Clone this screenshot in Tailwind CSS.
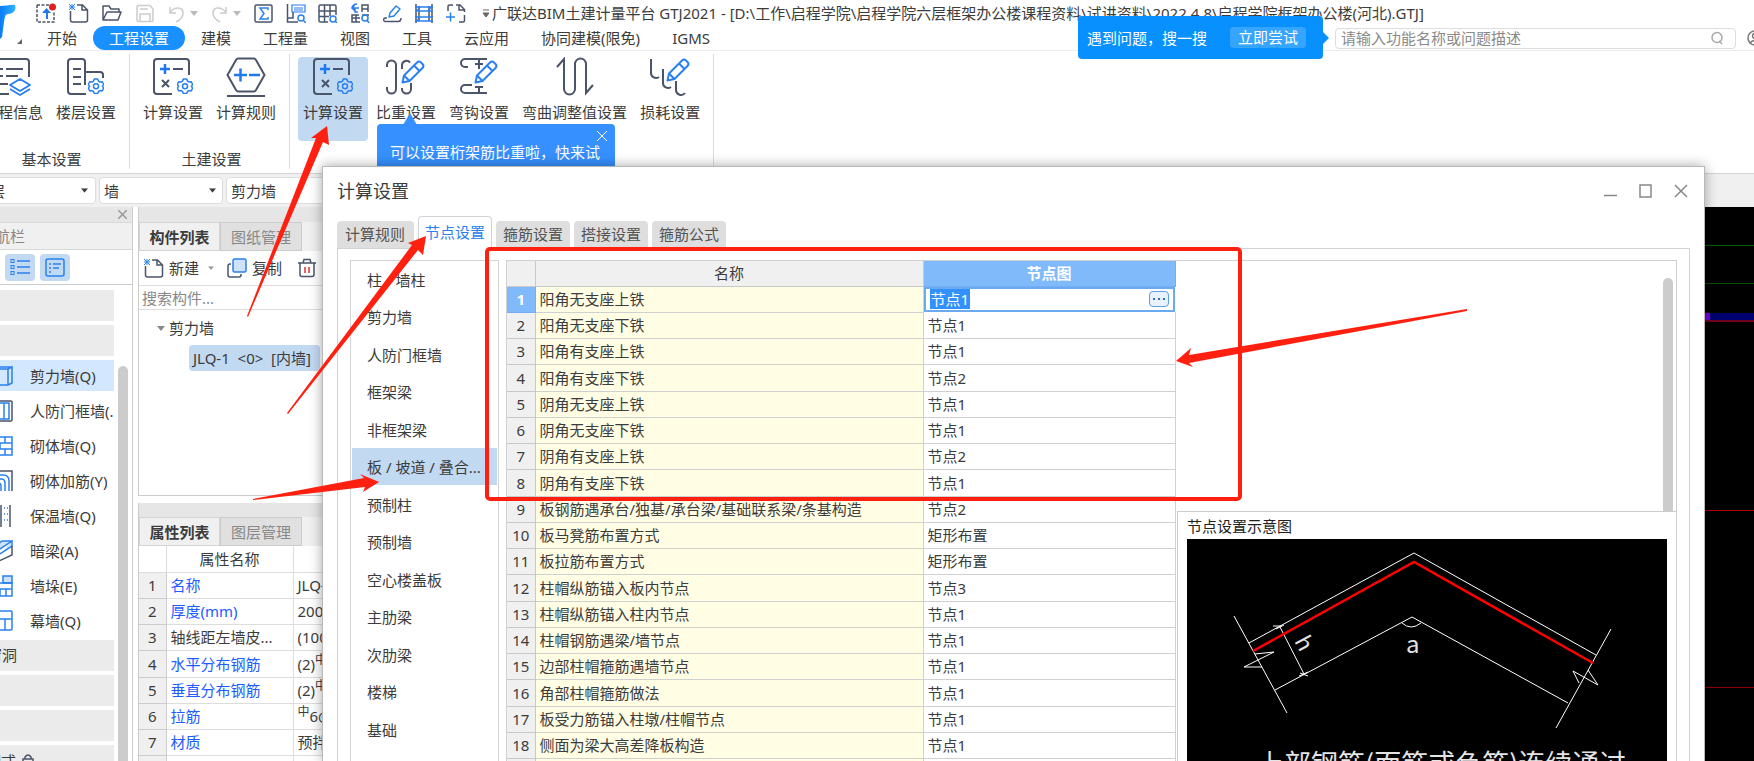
<!DOCTYPE html>
<html lang="zh-CN">
<head>
<meta charset="utf-8">
<title>广联达BIM土建计量平台 GTJ2021</title>
<script src="https://cdn.jsdelivr.net/npm/@tailwindcss/browser@4"></script>
</head>
<body class="relative flex h-screen flex-col overflow-hidden bg-white font-['Noto_Sans','Noto_Sans_CJK_SC',sans-serif] text-[15px] leading-5 text-[#3c3c3c]">

<svg class="absolute h-0 w-0">
  <defs>
    <linearGradient id="lg" x1="0" x2="1"><stop offset="0" stop-color="#0a7cf5"/><stop offset="1" stop-color="#2fb4ff"/></linearGradient>
    <symbol id="gear" viewBox="0 0 16 16">
      <path d="M6.300.8h3.400l.8 2 1.500.9 2.200-.3 1.500 2.700-1.300 1.900 1.300 1.900-1.500 2.700-2.200-.3-1.500.9-.8 2H6.300l-.8-2-1.500-.9-2.200.3L.3 9.900 1.600 8 .3 6.100l1.500-2.700 2.200.3 1.500-.9z" transform="translate(0 .3)" fill="none" stroke="#2a80ee" stroke-width="1.500" stroke-linejoin="round"/>
      <circle cx="8" cy="8.200" r="2.500" fill="none" stroke="#2a80ee" stroke-width="1.500"/>
    </symbol>
    <symbol id="pencil" viewBox="0 0 24 24">
      <path d="M1.500 22.500l1.500-7L16 2.500q2-2 4 0l1.500 1.500q2 2 0 4L8.500 21zM13 5.500l5.500 5.500M3 15.500L8.500 21" fill="none" stroke="#2a80ee" stroke-width="2" stroke-linejoin="round"/>
    </symbol>
    <symbol id="calc" viewBox="0 0 42 40">
      <path d="M37 18V5a3 3 0 0 0-3-3H5a3 3 0 0 0-3 3v29a3 3 0 0 0 3 3h15" fill="none" stroke="#4b5468" stroke-width="2"/>
      <path d="M8 12h10M13 7v10" stroke="#1f78ee" stroke-width="2.500"/>
      <path d="M21 12h10M10 23l7 7M17 23l-7 7" stroke="#4b5468" stroke-width="2"/>
      <use href="#gear" x="25" y="21" width="16" height="16"/>
    </symbol>
    <symbol id="caret" viewBox="0 0 8 5"><path d="M0 0h8L4 5z" fill="currentColor"/></symbol>
  </defs>
</svg>

<header class="relative">
  <svg class="absolute left-0 top-0" width="24" height="48" viewBox="0 0 24 48">
    <path d="M0 6C6 6 11 4 15 5c2 5-2 9-7 9-3 0-3 3-4 8L2 37l-2 2z" fill="url(#lg)"/>
    <path d="M22 39v5h-5z" fill="#666"/>
  </svg>
  <div class="flex h-[26px] items-center pl-9">
    <div class="flex items-center gap-[13px]">
      <button aria-label="上传"><svg width="20" height="20" viewBox="0 0 20 20"><path d="M1 2h12M1 2v17h17V8" fill="none" stroke="#4b5468" stroke-width="1.500" stroke-dasharray="3 1.500"/><path d="M10 16V10H6l4.500-5L15 10h-3v6z" fill="#1f78ee"/><circle cx="16.500" cy="4" r="3.500" fill="#e02020"/></svg></button>
      <button aria-label="新建"><svg width="20" height="20" viewBox="0 0 20 20"><path d="M1.500 8v9a2 2 0 0 0 2 2h13a2 2 0 0 0 2-2V7l-5-5H8M13 2v5h5" fill="none" stroke="#4b5468" stroke-width="1.500"/><path d="M0 1l6 6M6 1L0 7M3 1v6M0 4h6" stroke="#2a80ee" stroke-width="1"/></svg></button>
      <button aria-label="打开"><svg width="20" height="20" viewBox="0 0 20 20"><path d="M1 17V3h6l2 3h8v3M1 17l4-8h14l-3 8z" fill="none" stroke="#4b5468" stroke-width="1.500" stroke-linejoin="round"/></svg></button>
      <button aria-label="保存"><svg width="20" height="20" viewBox="0 0 20 20"><path d="M2 4a1.500 1.500 0 0 1 1.500-1.500H15L18 6v11a1.500 1.500 0 0 1-1.500 1.500h-13A1.500 1.500 0 0 1 2 17zM5 6h8M5 18v-7h10v7" fill="none" stroke="#ccc" stroke-width="1.500"/></svg></button>
      <button aria-label="撤销" class="flex items-center gap-0.5 text-[#bbb]"><svg width="20" height="20" viewBox="0 0 20 20"><path d="M2 4v6h6M2 9.500C7 3 15 4 15 10c0 4-3 7-7 9" fill="none" stroke="#ccc" stroke-width="1.500"/></svg><svg width="8" height="5"><use href="#caret"/></svg></button>
      <button aria-label="重做" class="flex items-center gap-0.5 text-[#bbb]"><svg width="20" height="20" viewBox="0 0 20 20"><path d="M15 4v6H9M15 9.500C10 3 2 4 2 10c0 4 3 7 7 9" fill="none" stroke="#ccc" stroke-width="1.500"/></svg><svg width="8" height="5"><use href="#caret"/></svg></button>
    </div>
    <div class="ml-[13px] flex items-center gap-3">
      <button aria-label="汇总计算"><svg width="20" height="20" viewBox="0 0 20 20"><rect x="1" y="2" width="17" height="17" rx="1.500" fill="none" stroke="#4b5468" stroke-width="1.500"/><path d="M14 7V5H6l4 5.500L6 16h8v-2" fill="none" stroke="#2a80ee" stroke-width="1.500"/></svg></button>
      <button aria-label="查看计算式"><svg width="20" height="20" viewBox="0 0 20 20"><path d="M1.500 1v18H12M1 15h6V9" fill="none" stroke="#4b5468" stroke-width="1.500"/><path d="M6 2h13v7H6zM8 5h9M8 7h9" fill="none" stroke="#2a80ee" stroke-width="1.200" /><circle cx="15" cy="15" r="3" fill="none" stroke="#2a80ee" stroke-width="1.500"/><path d="M17 17l3 3" stroke="#2a80ee" stroke-width="1.500"/></svg></button>
      <button aria-label="查看报表"><svg width="20" height="20" viewBox="0 0 20 20"><path d="M10 19H2.500A1.500 1.500 0 0 1 1 17.500v-14A1.500 1.500 0 0 1 2.500 2h14A1.500 1.500 0 0 1 18 3.500V12M1 8h17M1 13.500h10M6.500 2v17M12 2v11" fill="none" stroke="#4b5468" stroke-width="1.500"/><circle cx="15" cy="16" r="3" fill="none" stroke="#2a80ee" stroke-width="1.500"/><path d="M17 18l2 2" stroke="#2a80ee" stroke-width="1.500"/></svg></button>
      <button aria-label="查看钢筋量"><svg width="20" height="20" viewBox="0 0 20 20"><path d="M12 9V2h6v7M12 6h6M9 12H2v7h8M2 15h8M6 12v7M12 12h7" fill="none" stroke="#4b5468" stroke-width="1.500"/><path d="M7 1C4 1 2 3 2 5h7M5 2L2 5l3 3M8 9H5V5" fill="none" stroke="#2a80ee" stroke-width="1.500"/><circle cx="15" cy="15" r="3" fill="none" stroke="#2a80ee" stroke-width="1.500"/><path d="M17 17l2 3" stroke="#2a80ee" stroke-width="1.500"/></svg></button>
      <button aria-label="编辑"><svg width="20" height="20" viewBox="0 0 20 20"><path d="M5 15H3a1.800 1.800 0 0 0 0 3.500h13c2 0 3-1 3-3.500" fill="none" stroke="#4b5468" stroke-width="1.500"/><path d="M7 14l1-4 6-7 4 3-6 7z" fill="none" stroke="#2a80ee" stroke-width="1.500" stroke-linejoin="round"/></svg></button>
      <button aria-label="钢筋三维"><svg width="20" height="20" viewBox="0 0 20 20"><path d="M2 1v19M18 1v19M5 3v15M15 3v15" stroke="#4b5468" stroke-width="1.500"/><path d="M1 4h18M1 8h18M1 14h18M1 18h18M3 8l3-4M3 18l3-4M14 8l3-4" stroke="#2a80ee" stroke-width="1.500"/></svg></button>
      <button aria-label="全屏"><svg width="20" height="20" viewBox="0 0 20 20"><path d="M2 8V3.500A1.500 1.500 0 0 1 3.500 2H7M10 2h4l4.500 4.500V9M13 2v5h5M18.500 12v5.500A1.500 1.500 0 0 1 17 19h-4" fill="none" stroke="#4b5468" stroke-width="1.500"/><path d="M0 14h9M4.500 9.500v9" stroke="#2a80ee" stroke-width="1.500"/></svg></button>
    </div>
    <svg class="ml-4 text-[#666]" width="8" height="9" viewBox="0 0 8 9"><path d="M1 1h6M1 4h6L4 8z" fill="currentColor" stroke="currentColor"/></svg>
    <h1 class="ml-0.5 whitespace-nowrap">广联达BIM土建计量平台 GTJ2021 - [D:\工作\启程学院\启程学院六层框架办公楼课程资料\试讲资料\2022.4.8\启程学院框架办公楼(河北).GTJ]</h1>
  </div>
  <div class="flex h-[25px] items-center border-b border-[#ececec] pl-[31px] pr-[7px]">
    <nav class="flex flex-1 whitespace-nowrap">
      <button class="px-4">开始</button>
      <button class="rounded-full bg-[#1890ff] px-4 py-0.5 text-white">工程设置</button>
      <button class="px-4">建模</button>
      <button class="px-4">工程量</button>
      <button class="px-4">视图</button>
      <button class="px-4">工具</button>
      <button class="px-4">云应用</button>
      <button class="px-4">协同建模(限免)</button>
      <button class="px-4">IGMS</button>
    </nav>
    <label class="mr-[11px] flex h-[21px] w-[401px] items-center rounded-sm border border-[#ddd] px-[5px]">
      <input aria-label="功能搜索" class="min-w-0 flex-1 placeholder-[#8a8a8a] outline-none" placeholder="请输入功能名称或问题描述">
      <svg class="mr-1.5" width="14" height="14" viewBox="0 0 14 14"><circle cx="7" cy="6.500" r="5" fill="none" stroke="#aaa" stroke-width="1.500"/><path d="M9 10l3 3" stroke="#aaa" stroke-width="1.500"/></svg>
    </label>
    <button aria-label="账户" class="-mr-4"><svg width="16" height="16" viewBox="0 0 16 16" fill="none" stroke="#777" stroke-width="1.500"><circle cx="8" cy="8" r="7"/><circle cx="8" cy="6" r="2.500"/><path d="M3 13q5-5 10 0"/></svg></button>
  </div>
  <div class="absolute left-[1078px] top-4 flex h-[43px] w-[245px] items-center rounded bg-[#0890ff] pl-[9px] text-white">
    <span class="flex-1 whitespace-nowrap">遇到问题，搜一搜</span>
    <button class="mr-[17px] rounded-sm bg-[#36a5ff] px-2 leading-[21px]">立即尝试</button>
    <svg class="absolute -right-1.5 top-4" width="6" height="12"><path d="M0 0l6 6-6 6z" fill="#0890ff"/></svg>
  </div>
</header>

<section aria-label="功能区" class="relative flex h-[122px] gap-2 whitespace-nowrap pt-[3px]">
  <div class="-ml-[22px] flex flex-col pt-[3px]">
    <div class="flex gap-[3px]">
      <button class="flex h-[84px] flex-col items-center gap-[5px] px-[5px]"><svg width="42" height="40" viewBox="0 0 42 40"><path d="M37 20V5a3 3 0 0 0-3-3H5a3 3 0 0 0-3 3v29a3 3 0 0 0 3 3h12M8 12h3M14 12h17M8 19h3M14 19h12M8 27h8" fill="none" stroke="#4b5468" stroke-width="2"/><path d="M28 22l10 6-10 6-10-6zM18 32l10 6 10-6" fill="none" stroke="#2a80ee" stroke-width="2" stroke-linejoin="round"/></svg>工程信息</button>
      <button class="flex h-[84px] flex-col items-center gap-[5px] px-[5px]"><svg width="42" height="40" viewBox="0 0 42 40"><path d="M20 28V5a3 3 0 0 0-3-3H6a3 3 0 0 0-3 3v29a3 3 0 0 0 3 3h15M8 12h8M8 20h8M8 27h8M20 15h15a3 3 0 0 1 3 3v3" fill="none" stroke="#4b5468" stroke-width="2"/><use href="#gear" x="23" y="21" width="16" height="16"/></svg>楼层设置</button>
    </div>
    <div class="pl-1 pt-2 text-center">基本设置</div>
  </div>
  <div class="h-[115px] w-px bg-[#ddd]"></div>
  <div class="flex flex-col pt-[3px]">
    <div class="flex gap-[3px]">
      <button class="flex h-[84px] flex-col items-center gap-[5px] px-[5px]"><svg width="42" height="40"><use href="#calc"/></svg>计算设置</button>
      <button class="flex h-[84px] flex-col items-center gap-[5px] px-[5px]"><svg width="42" height="40" viewBox="0 0 42 40"><path d="M2.500 18L11 3q1-1.500 2-1.500h16q1 0 2 1.500l8.500 15L31 33q-1 1.500-2 1.500H13q-1 0-2-1.500zM2 39h38" fill="none" stroke="#4b5468" stroke-width="2"/><path d="M9 18h13M15.500 11.500v13M24 18h11" stroke="#1f78ee" stroke-width="2.500"/></svg>计算规则</button>
    </div>
    <div class="pl-1 pt-2 text-center">土建设置</div>
  </div>
  <div class="h-[115px] w-px bg-[#ddd]"></div>
  <div class="flex gap-[3px] pt-[3px]">
    <button class="flex h-[84px] flex-col items-center gap-[5px] rounded bg-[#c2d9f2] px-[5px]"><svg width="42" height="40"><use href="#calc"/></svg>计算设置</button>
    <button class="flex h-[84px] flex-col items-center gap-[5px] px-[5px]"><svg width="42" height="40" viewBox="0 0 42 40"><path d="M2 10V8a4.500 4.500 0 0 1 9 0v24a4.500 4.500 0 0 1-9 0v-2M17 12V8a4.500 4.500 0 0 1 8-2.500M17 31v1a4.500 4.500 0 0 0 9 0v-6" fill="none" stroke="#4b5468" stroke-width="2"/><use href="#pencil" x="16" y="3" width="24" height="24"/></svg>比重设置</button>
    <button class="flex h-[84px] flex-col items-center gap-[5px] px-[5px]"><svg width="42" height="40" viewBox="0 0 42 40"><path d="M29 2H7a4 4 0 0 0 0 8h3M29 36H7a4 4 0 0 1 0-8h7M21 3v9M17 7h8M21 30v6M17 30h8" fill="none" stroke="#4b5468" stroke-width="2"/><use href="#pencil" x="16" y="3" width="24" height="24"/></svg>弯钩设置</button>
    <button class="flex h-[84px] flex-col items-center gap-[5px] px-[5px]"><svg width="42" height="40" viewBox="0 0 42 40"><path d="M3 10l7-8v30a5 5 0 0 0 11 0V7a5 5 0 0 1 11 0v29l7-8" fill="none" stroke="#4b5468" stroke-width="2"/></svg>弯曲调整值设置</button>
    <button class="flex h-[84px] flex-col items-center gap-[5px] px-[5px]"><svg width="42" height="40" viewBox="0 0 42 40"><path d="M2 2v14a5 5 0 0 0 8 4M14 12v14a5 5 0 0 0 8 4M27 24v9a5 5 0 0 0 9 3" fill="none" stroke="#4b5468" stroke-width="2"/><use href="#pencil" x="17" y="1" width="24" height="24"/></svg>损耗设置</button>
  </div>
  <div class="h-[115px] w-px bg-[#ddd]"></div>
  <div role="tooltip" class="absolute left-[377px] top-[73px] h-[60px] w-[238px] rounded bg-[#3690ff] pl-[13px] pt-[18px] text-white">
    <svg class="absolute -top-[11px] left-[26px]" width="14" height="12"><path d="M7 0l7 12H0z" fill="#3690ff"/></svg>
    <button aria-label="关闭提示" class="absolute right-[7px] top-[6px]"><svg width="12" height="12"><path d="M1 1l10 10M11 1L1 11" stroke="#fff" stroke-width="1"/></svg></button>
    可以设置桁架筋比重啦，快来试
  </div>
</section>

<div class="flex h-[34px] items-center gap-[3px] border-t border-[#d4d4d4] bg-[#f0f0f0]">
  <div class="relative -ml-[34px] w-[130px]"><select aria-label="楼层" class="h-[27px] w-full appearance-none rounded border border-[#ddd] bg-white px-2"><option>首层</option></select><svg class="absolute right-2 top-[11px]" width="7" height="5" viewBox="0 0 8 5"><use href="#caret"/></svg></div>
  <div class="relative w-[124px]"><select aria-label="构件大类" class="h-[27px] w-full appearance-none rounded border border-[#ddd] bg-white px-1"><option>墙</option></select><svg class="absolute right-[7px] top-[11px]" width="7" height="5" viewBox="0 0 8 5"><use href="#caret"/></svg></div>
  <div class="w-[124px]"><select aria-label="构件类型" class="h-[27px] w-full appearance-none rounded border border-[#ddd] bg-white px-1"><option>剪力墙</option></select></div>
</div>

<main class="flex min-h-0 flex-1">
  <aside class="flex w-[133px] shrink-0 flex-col border-r border-[#ccc] whitespace-nowrap">
    <div class="flex h-[15px] shrink-0 items-center justify-end bg-[#e6e6e6] pr-[5px]"><button aria-label="关闭导航栏"><svg class="block" width="9" height="9"><path d="M0 0l9 9M9 0L0 9" stroke="#999" stroke-width="1.500"/></svg></button></div>
    <h2 class="-ml-5 h-[28px] shrink-0 border-y border-[#d8d8d8] bg-[#f0f0f0] leading-[26px] text-[#888]">导航栏</h2>
    <div class="flex h-[35px] shrink-0 items-center gap-[5px] border-b border-[#ccc] pl-[5px]">
      <button aria-label="列表" class="grid h-[27px] w-[30px] place-items-center rounded bg-[#c2d9f2]"><svg width="20" height="18"><path d="M7 3h13M7 9h13M7 15h13" stroke="#2a80ee" stroke-width="1.500"/><g fill="none" stroke="#2a80ee"><rect x="1" y="1.500" width="3" height="3"/><rect x="1" y="7.500" width="3" height="3"/><rect x="1" y="13.500" width="3" height="3"/></g></svg></button>
      <button aria-label="卡片" class="grid h-[27px] w-[30px] place-items-center rounded bg-[#c2d9f2]"><svg width="20" height="19" fill="none" stroke="#2a80ee" stroke-width="1.500"><rect x="1" y="1" width="18" height="17" rx="2"/><path d="M4 6h2M8 6h8M4 10h2M8 10h6M4 14h2"/></svg></button>
    </div>
    <div class="flex min-h-0 flex-1 pt-[5px]">
      <ul id="nav" class="flex w-[114px] flex-col gap-1"></ul>
      <div class="ml-1 mt-[76px] w-2.5 rounded-t-full bg-[#ccc]"></div>
    </div>
  </aside>

  <div class="ml-[5px] flex w-[196px] shrink-0 flex-col overflow-hidden whitespace-nowrap">
    <section class="flex h-[289px] shrink-0 flex-col border-b border-l border-[#ccc]">
      <div class="h-[15px] shrink-0 bg-[#e6e6e6]"></div>
      <div class="flex h-[29px] shrink-0 bg-[#f0f0f0]">
        <button class="w-[81px] border border-[#d4d4d4] font-bold">构件列表</button>
        <button class="w-[82px] border border-[#ccc] bg-[#e0e0e0] text-[#888]">图纸管理</button>
      </div>
      <div class="flex h-[35px] shrink-0 items-center border-b border-[#ddd] pl-[5px]">
        <button class="flex items-center"><svg class="mr-[5px]" width="20" height="20" viewBox="0 0 20 20"><path d="M1.500 8v9a2 2 0 0 0 2 2h13a2 2 0 0 0 2-2V7l-5-5H8M13 2v5h5" fill="none" stroke="#4b5468" stroke-width="1.500"/><path d="M0 1l6 6M6 1L0 7M3 1v6M0 4h6" stroke="#2a80ee"/></svg>新建<svg class="ml-[9px] text-[#999]" width="6" height="4" viewBox="0 0 8 5"><use href="#caret"/></svg></button>
        <button class="ml-[13px] flex items-center gap-[5px]"><svg width="20" height="20" viewBox="0 0 20 20"><path d="M4 6H3a2 2 0 0 0-2 2v9a2 2 0 0 0 2 2h9a2 2 0 0 0 2-2v-1" fill="none" stroke="#4b5468" stroke-width="1.500"/><rect x="6" y="1" width="13" height="13" rx="1.500" fill="#cfe2fb" stroke="#2a80ee" stroke-width="1.500"/></svg>复制</button>
        <button aria-label="删除" class="ml-4"><svg width="18" height="20" viewBox="0 0 18 20"><path d="M0 5h18M5 5l1-3.500h6L13 5M2 5v11.500a2 2 0 0 0 2 2h10a2 2 0 0 0 2-2V5" fill="none" stroke="#4b5468" stroke-width="1.500"/><path d="M7 9v6M11 9v6" stroke="#e0303a" stroke-width="1.500"/></svg></button>
      </div>
      <input aria-label="搜索构件" class="h-[24px] shrink-0 border-b border-[#ddd] px-[3px] placeholder-[#888] outline-none" placeholder="搜索构件...">
      <div class="pl-[18px] pt-2">
        <div class="flex items-center gap-1"><svg class="text-[#888]" width="8" height="5"><use href="#caret"/></svg>剪力墙</div>
        <button class="ml-[32px] mt-[7px] w-[131px] rounded bg-[#c2d9f2] px-1 text-left leading-[26px]">JLQ-1&nbsp; &lt;0&gt;&nbsp; [内墙]</button>
      </div>
    </section>
    <section class="mt-[7px] flex min-h-0 flex-1 flex-col border-l border-[#ccc]">
      <div class="h-[14px] shrink-0 bg-[#e6e6e6]"></div>
      <div class="flex h-[29px] shrink-0 bg-[#f0f0f0]">
        <button class="w-[81px] border border-[#d4d4d4] font-bold">属性列表</button>
        <button class="w-[82px] border border-[#ccc] bg-[#e0e0e0] text-[#888]">图层管理</button>
      </div>
      <table class="w-full table-fixed border-collapse">
        <colgroup><col class="w-[27px]"><col class="w-[127px]"><col></colgroup>
        <thead><tr class="h-[26px]"><th class="border-r border-b border-[#ddd]"></th><th class="border-r border-b border-[#ddd] font-normal">属性名称</th><th class="border-b border-[#ddd]"></th></tr></thead>
        <tbody id="props" class="[&>tr]:h-[26px] [&>tr:nth-child(4n)]:h-[27px]"></tbody>
      </table>
    </section>
  </div>

  <div aria-label="绘图区" class="flex flex-1 flex-col bg-black">
    <div class="mt-[38px] h-px bg-[#006000]"></div>
    <div class="mt-[37px] h-px bg-[#005000]"></div>
    <div class="mt-[29px] flex h-[9px] border-b-2 border-[#70001c] bg-[#000070]"><div class="ml-auto mr-[44px] w-[6px] bg-[#7800e0]"></div></div>
    <div class="mt-[188px] h-px bg-[#b00000]"></div>
    <div class="mt-[176px] h-px bg-[#900000]"></div>
  </div>
</main>

<section role="dialog" aria-labelledby="dlg" class="absolute bottom-0 left-[322px] right-[49px] top-[166px] flex flex-col border border-b-0 border-[#b8b8b8] bg-white pl-[14px] pr-[14px] shadow-[0_0_12px_rgba(0,0,0,0.35)]">
  <div class="flex h-[48px] shrink-0 items-center pr-0.5">
    <h2 id="dlg" class="flex-1 text-[18px]">计算设置</h2>
    <div class="flex items-center gap-[22px]">
      <button aria-label="最小化"><svg width="13" height="14"><path d="M0 11.500h13" stroke="#888" stroke-width="1.500"/></svg></button>
      <button aria-label="最大化"><svg width="13" height="14"><rect x="1" y="1" width="11" height="12" fill="none" stroke="#888" stroke-width="1.500"/></svg></button>
      <button aria-label="关闭"><svg width="14" height="14"><path d="M1 1l12 12M13 1L1 13" stroke="#888" stroke-width="1.500"/></svg></button>
    </div>
  </div>
  <div role="tablist" class="relative z-10 -mb-px flex h-[34px] shrink-0 items-end gap-[4px] whitespace-nowrap text-[#555]">
    <button role="tab" class="mb-px h-[27px] rounded-t bg-[#dedede] pb-0.5 pl-2 pr-[9px]">计算规则</button>
    <button role="tab" aria-selected="true" class="h-[33px] rounded-t border border-b-0 border-[#cfd3d8] bg-white px-[6px] pb-0.5 text-[#2a80ee]">节点设置</button>
    <button role="tab" class="mb-px h-[27px] rounded-t bg-[#dedede] px-[7px] pb-0.5">箍筋设置</button>
    <button role="tab" class="mb-px h-[27px] rounded-t bg-[#dedede] px-[7px] pb-0.5">搭接设置</button>
    <button role="tab" class="mb-px h-[27px] rounded-t bg-[#dedede] px-[7px] pb-0.5">箍筋公式</button>
  </div>
  <div class="flex min-h-0 flex-1 gap-[7px] border border-b-0 border-[#cfd3d8] pl-3 pr-3 pt-[11px]">
    <ul id="cats" class="flex w-[149px] shrink-0 flex-col border border-b-0 border-[#d4d4d4] px-px whitespace-nowrap"></ul>
    <div class="relative flex min-w-0 flex-1 overflow-hidden border border-b-0 border-[#d0d0d0]">
      <div class="shrink-0">
        <table class="w-[668px] table-fixed border-collapse whitespace-nowrap">
          <colgroup><col class="w-[28px]"><col class="w-[388px]"><col class="w-[252px]"></colgroup>
          <thead><tr class="h-[25px] bg-[#f0f0f0]"><th class="border-r border-b border-[#c8c8c8]"></th><th class="border-r border-b border-[#c8c8c8] font-normal">名称</th><th class="border-r border-b border-[#74aef2] bg-[#80bafb] text-white">节点图</th></tr></thead>
          <tbody id="nodes" class="[&>tr]:h-[26px] [&>tr:nth-child(4n)]:h-[27px]"></tbody>
        </table>
      </div>
      <div class="ml-auto mr-[3px] mt-[17px] w-2.5 rounded-t-full bg-[#ccc]"></div>
      <figure class="absolute bottom-0 right-0 top-[250px] flex w-[499px] flex-col border-l border-t border-[#ccc] bg-white pl-[9px] pr-[9px]">
        <figcaption class="shrink-0 pb-[3px] pt-1 leading-5 text-[#222]">节点设置示意图</figcaption>
        <svg class="min-h-0 w-full flex-1 bg-black" viewBox="1187 539 480 222" preserveAspectRatio="xMidYMin slice" fill="none" stroke="#fff">
          <path d="M1249 643L1414 553L1596 655M1275 690L1412 617L1568 703M1234 616L1287 713M1611 629L1556 728"/>
          <path d="M1255 654L1274 652L1244 667H1262M1579 683L1573 671L1598 685L1588 670M1280 627L1304 674M1273 626h9M1276 629l8-4M1299 676l9-4M1300 673l8 3M1402 623Q1411 631 1421 623"/>
          <path d="M1253 651L1414 562L1593 663" stroke="#f00" stroke-width="2.500"/>
          <g fill="#e4e4e4" stroke="none" class="font-['Noto_Sans_CJK_SC',sans-serif]">
            <text x="1406" y="653" font-size="24">a</text>
            <text transform="translate(1294 641) rotate(62)" font-size="22">h</text>
            <text x="1257" y="774" font-size="27">上部钢筋(面筋或负筋)连续通过</text>
          </g>
        </svg>
      </figure>
    </div>
  </div>
</section>

<svg class="pointer-events-none absolute left-0 top-0 z-20" width="1754" height="761" fill="#ff2010">
  <rect x="487" y="249" width="753" height="250" rx="3" fill="none" stroke="#ff2010" stroke-width="4"/>
  <path d="M327 126L329 145L323 142L248 317L247 316L316 138L311 138z"/>
  <path d="M426 236L423 255L418 250L288 414L287 413L412 245L408 243z"/>
  <path d="M379 482L363 492L365 487L253 500V499L364 478L360 474z"/>
  <path d="M1176 361L1191 348L1189 355L1467 309V311L1189 363L1193 367z"/>
</svg>

<script>
const blueIcon = d => `<svg class="shrink-0" width="20" height="22" viewBox="0 0 20 22" fill="none" stroke="#2a80ee" stroke-width="1.500">${d}</svg>`;
const nav = [
  ['g',''],['g',''],
  ['s','剪力墙(Q)','<path d="M1 4h14v16H1zM15 4l4-2v16l-4 2M1 4l3-2h15"/>'],
  ['i','人防门框墙(.','<rect x="1" y="1" width="18" height="20" rx="1" stroke="#4b5468"/><path d="M4 3h12v16H4zM11 3v16"/>'],
  ['i','砌体墙(Q)','<path d="M1 2h18v18H1zM1 8h18M1 14h18M12 2v6M7 8v6M12 14v6"/>'],
  ['i','砌体加筋(Y)','<path d="M1 1h18v20" stroke="#4b5468"/><path d="M1 5h9q6 0 6 6v10M1 9h7q4 0 4 4v8M1 13h5q2 0 2 3v5"/>'],
  ['i','保温墙(Q)','<path d="M8 0v22M17 0v22" stroke="#4b5468"/><path d="M11 3h1M14 3h1M11 9h1M14 9h1M11 15h1M14 15h1"/>'],
  ['i','暗梁(A)','<path d="M1 7L9 1h10L7 9zM7 14L19 6V1" fill="#cfe2fb"/><path d="M19 6v9L6 21V13" stroke="#4b5468"/>'],
  ['i','墙垛(E)','<path d="M10 1h9v7h-9z" fill="#cfe2fb"/><path d="M19 8v13H1V8zM1 14h18M13 14v7M7 14v7"/>'],
  ['i','幕墙(Q)','<path d="M1 1h17a1 1 0 0 1 1 1v17a1 1 0 0 1-1 1H1zM1 9h18M12 9v11"/>'],
  ['g','门窗洞'],['g',''],['g',''],['l','装配式']];
document.getElementById('nav').innerHTML = nav.map(([k,t,d]) =>
  k==='g' ? `<li class="h-[31px] shrink-0 overflow-hidden bg-[#ebebeb] leading-[31px]"><span class="-ml-[28px]">${t}</span></li>` :
  k==='l' ? `<li class="flex h-[31px] shrink-0 items-center gap-1.5 overflow-hidden bg-[#ebebeb]"><span class="-ml-[29px]">${t}</span><svg width="12" height="14" fill="none" stroke="#4b5468" stroke-width="1.500"><rect x="1" y="5" width="10" height="8"/><path d="M3 5V3q3-4 6 0v2M6 8v2"/></svg></li>` :
  `<li class="h-[31px] shrink-0 overflow-hidden"><button class="${k==='s' ? 'flex h-full w-full items-center gap-[17px] bg-[#d3e7ff]' : 'flex h-full w-full items-center gap-[17px]'}"><span class="-ml-[7px]">${blueIcon(d)}</span>${t}</button></li>`).join('');

const props = [['名称','JLQ-1',1],['厚度(mm)','200',1],['轴线距左墙皮...','(100)',0],['水平分布钢筋','(2)<sup class="text-[12px]">中</sup>',1],['垂直分布钢筋','(2)<sup class="text-[12px]">中</sup>',1],['拉筋','<sup class="text-[12px]">中</sup>6@',1],['材质','预拌混凝土',1],['','',0]];
document.getElementById('props').innerHTML = props.map(([n,v,b],i) =>
  `<tr><td class="border-r border-b border-[#ccc] bg-[#f0f0f0] text-center">${i<7?i+1:''}</td><td class="${b ? 'border-r border-b border-[#ddd] pl-1 text-[#1e5cff]' : 'border-r border-b border-[#ddd] pl-1'}">${n}</td><td class="overflow-hidden border-b border-[#ddd] pl-1">${v}</td></tr>`).join('');

const cats = ['柱 / 墙柱','剪力墙','人防门框墙','框架梁','非框架梁','板 / 坡道 / 叠合...','预制柱','预制墙','空心楼盖板','主肋梁','次肋梁','楼梯','基础'];
document.getElementById('cats').innerHTML = cats.map((t,i) =>
  `<li><button class="${i===5 ? 'h-[37px] w-full bg-[#c2d9f2] pl-[15px] text-left' : 'h-[37px] w-full pl-[15px] text-left'} ${i%2 ? 'mb-px' : ''}">${t}</button></li>`).join('');

const nodes = [['阳角无支座上铁','节点1'],['阳角无支座下铁','节点1'],['阳角有支座上铁','节点1'],['阳角有支座下铁','节点2'],['阴角无支座上铁','节点1'],['阴角无支座下铁','节点1'],['阴角有支座上铁','节点2'],['阴角有支座下铁','节点1'],['板钢筋遇承台/独基/承台梁/基础联系梁/条基构造','节点2'],['板马凳筋布置方式','矩形布置'],['板拉筋布置方式','矩形布置'],['柱帽纵筋锚入板内节点','节点3'],['柱帽纵筋锚入柱内节点','节点1'],['柱帽钢筋遇梁/墙节点','节点1'],['边部柱帽箍筋遇墙节点','节点1'],['角部柱帽箍筋做法','节点1'],['板受力筋锚入柱墩/柱帽节点','节点1'],['侧面为梁大高差降板构造','节点1'],['','']];
document.getElementById('nodes').innerHTML = nodes.map(([n,v],i) => {
  const num = i===0 ? 'border-r border-b border-[#74aef2] bg-[#80bafb] text-center font-bold text-white' : 'border-r border-b border-[#c8c8c8] bg-[#f0f0f0] text-center';
  const val = i===0 ? '<td class="p-0"><div class="flex h-[25px] items-center border-2 border-[#6aaaf0] px-1"><span class="bg-[#3390ff] px-px text-white">节点1</span><button aria-label="选择节点图" class="ml-auto grid h-4 w-5 place-items-center rounded-sm border border-[#5a9fe8] bg-[#e8f1fc]"><svg width="12" height="3" fill="#2a6fc8"><path d="M0 0h2v2H0zM5 0h2v2H5zM10 0h2v2h-2z"/></svg></button></div></td>' : `<td class="border-r border-b border-[#d0d0d0] pl-1">${v}</td>`;
  return `<tr><td class="${num}">${i<18?i+1:''}</td><td class="border-r border-b border-[#d0d0d0] bg-[#fffde4] pl-1">${n}</td>${val}</tr>`;
}).join('');
</script>
</body>
</html>
